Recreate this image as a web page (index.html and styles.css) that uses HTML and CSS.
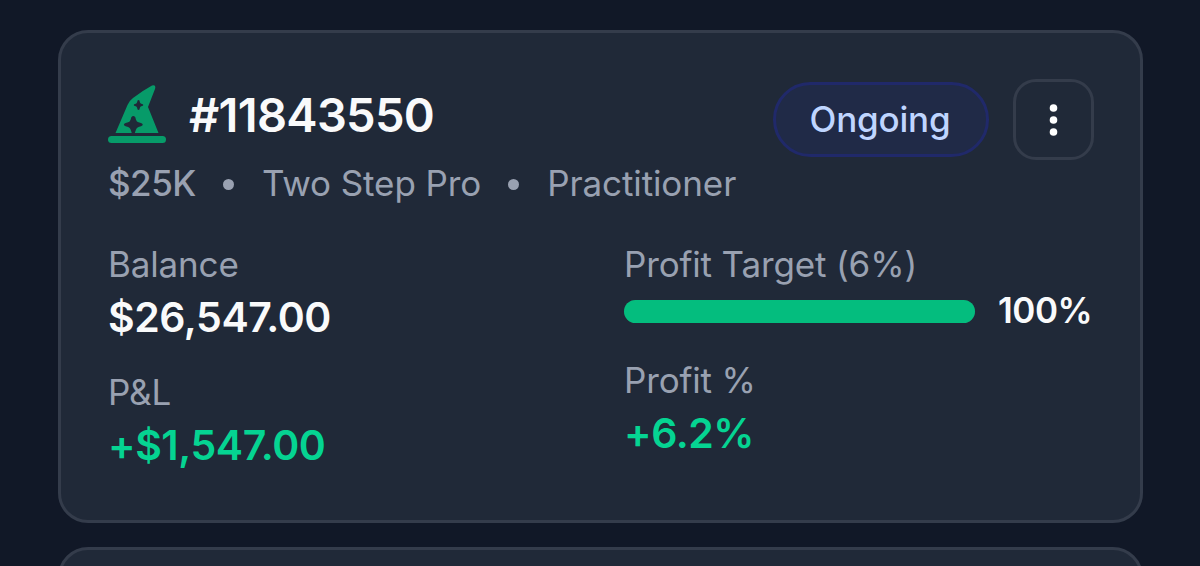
FILE: index.html
```
<!DOCTYPE html>
<html lang="en">
<head>
    <meta charset="UTF-8">
    <title>Accounts</title>
    <link rel="stylesheet" href="styles.css">
</head>
<body>
<div class="list">
    <div class="card">
        <div class="header">
            <div class="account">
                <div class="title">
                    <svg class="hat" viewBox="0 0 58 58">
                        <path fill-rule="evenodd" d="M7.500 48L19.500 20Q21.500 15.500 25 13Q34 6 44 .5Q48.300-1 47 4L40 22L50.500 48H26.800L28 44.500Q28.600 42.500 30.500 42L33 41.300Q36.500 39.600 33 38L30.500 37.300Q28.600 36.700 28 34.700L27.300 32.300Q25.300 29.500 23.300 32.300L22.600 34.700Q22 36.700 20.100 37.300L17.600 38Q14.100 39.600 17.600 41.300L20.100 42Q22 42.500 22.600 44.500L23.800 48ZM30.500 15Q29.300 15 29.100 17.200Q28.800 18.400 27.700 18.700Q25.700 18.900 25.700 20Q25.700 21.100 27.700 21.300Q28.800 21.600 29.100 22.800Q29.300 25 30.500 25Q31.700 25 31.900 22.800Q32.200 21.600 33.300 21.300Q35.300 21.100 35.300 20Q35.300 18.900 33.300 18.700Q32.200 18.400 31.900 17.200Q31.700 15 30.500 15Z"/>
                        <rect y="51" width="58" height="7" rx="3.500"/>
                    </svg>
                    <span>#11843550</span>
                </div>
                <div class="info">
                    <b>$25K</b>
                    <i class="dot"></i>
                    <span>Two Step Pro</span>
                    <i class="dot"></i>
                    <span>Practitioner</span>
                </div>
            </div>
            <div class="actions">
                <div class="status">Ongoing</div>
                <button class="menu">
                    <svg width="10" height="34" viewBox="0 0 10 34">
                        <circle cx="4.500" cy="5" r="3.800"/>
                        <circle cx="4.500" cy="17" r="3.800"/>
                        <circle cx="4.500" cy="29" r="3.800"/>
                    </svg>
                </button>
            </div>
        </div>

        <div class="stats">
            <div class="column">
                <div>
                    <div class="label">Balance</div>
                    <div class="value">$26,547.00</div>
                </div>
                <div>
                    <div class="label">P&amp;L</div>
                    <div class="value green">+$1,547.00</div>
                </div>
            </div>
            <div class="column">
                <div>
                    <div class="label">Profit Target (6%)</div>
                    <div class="progress">
                        <div class="track">
                            <div class="bar" style="width: 100%"></div>
                        </div>
                        <span class="percent">100%</span>
                    </div>
                </div>
                <div>
                    <div class="label">Profit %</div>
                    <div class="value green">+6.2%</div>
                </div>
            </div>
        </div>
    </div>

    <div class="card"></div>
</div>
</body>
</html>
```

FILE: styles.css
```
* {
    box-sizing: border-box;
}

body {
    margin: 0;
    background-color: #111827;
    font-family: Inter, "Liberation Sans", sans-serif;
    color: #f9fafb;
}

.list {
    display: flex;
    flex-direction: column;
    gap: 24px;
    height: 566px;
    padding: 30px 57px 0 58px;
    overflow: hidden;
}

.card {
    flex: none;
    height: 493px;
    padding: 46px 46px 46px 47px;
    border: 3px solid #343c4b;
    border-radius: 30px;
    background-color: #202938;
}

.header {
    display: flex;
    justify-content: space-between;
    height: 127px;
}

.title {
    display: flex;
    align-items: center;
    gap: 23px;
    height: 70px;
    font-size: 47px;
    font-weight: 600;
    letter-spacing: -0.7px;
}

.hat {
    width: 58px;
    height: 58px;
    fill: #079b69;
}

.info {
    display: flex;
    align-items: center;
    height: 47px;
    margin-top: 10px;
    font-size: 35px;
    letter-spacing: -0.1px;
    color: #99a1b1;
}

.info b {
    font-weight: 500;
    letter-spacing: -0.5px;
}

.dot {
    width: 11px;
    height: 11px;
    margin: 4px 28px 0 27px;
    border-radius: 50%;
    background-color: #99a1b1;
}

.actions {
    display: flex;
    align-items: center;
    gap: 24px;
    height: 81px;
}

.status {
    width: 216px;
    height: 75px;
    border: 3px solid #20296a;
    border-radius: 38px;
    background-color: #202a47;
    line-height: 69px;
    text-align: center;
    font-size: 35px;
    font-weight: 500;
    letter-spacing: -0.2px;
    text-indent: -2px;
    color: #bfd5ff;
}

.menu {
    display: flex;
    align-items: center;
    justify-content: center;
    width: 81px;
    height: 81px;
    padding: 0;
    border: 3px solid #343c4b;
    border-radius: 23px;
    background: none;
    fill: #fff;
}

.stats {
    display: grid;
    grid-template-columns: 469px 470px;
    gap: 47px;
    margin-top: 35px;
}

.column {
    display: flex;
    flex-direction: column;
    gap: 22px;
}

.column:first-child {
    gap: 23px;
}

.label {
    height: 47px;
    line-height: 47px;
    font-size: 35px;
    letter-spacing: -0.15px;
    color: #99a1b1;
}

.value {
    height: 58px;
    line-height: 58px;
    font-size: 41px;
    font-weight: 600;
    letter-spacing: -0.45px;
}

.green {
    color: #05d492;
}

.progress {
    display: flex;
    align-items: center;
    gap: 23px;
    height: 47px;
}

.track {
    flex: 1;
    height: 23px;
    border-radius: 12px;
    background-color: #343c4b;
}

.bar {
    height: 100%;
    border-radius: 12px;
    background-color: #04bd7e;
}

.percent {
    width: 96px;
    margin-top: -2px;
    line-height: 45px;
    font-size: 35px;
    font-weight: 600;
    letter-spacing: -0.5px;
}
```
